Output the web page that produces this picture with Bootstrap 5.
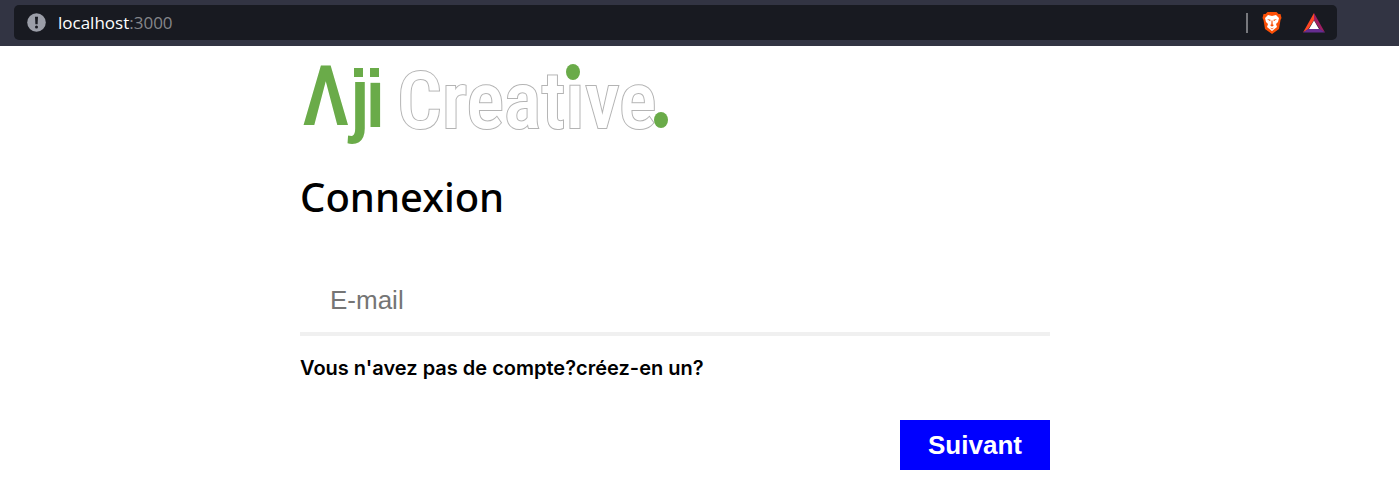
<!DOCTYPE html>
<html lang="fr">
<head>
<meta charset="utf-8">
<meta name="viewport" content="width=device-width, initial-scale=1">
<title>Connexion</title>
<link href="https://cdn.jsdelivr.net/npm/bootstrap@5.3.0/dist/css/bootstrap.min.css" rel="stylesheet">
<style>
  body { background: #fff; color: #000; }
  .browser-bar { background: #323443; height: 46px; padding: 5px 62px 6px 14px; }
  .address { background: #181a21; border-radius: 5px; padding: 0 11px 0 13px; font: 17px/35px "Open Sans", sans-serif; color: #fff; }
  .address .port { color: #85868a; }
  .divider { width: 2px; height: 20px; background: #77787d; margin-right: 14px; }
  .bat { margin-left: 20px; }
  .login { max-width: 750px; margin-left: 300px; padding-top: 14px; }
  .logo { display: block; width: 370px; height: 88px; overflow: visible; font-family: "Roboto Condensed", "Liberation Sans Narrow", sans-serif; }
  .login h1 { font: 500 40px/54px "Noto Sans", sans-serif; margin: 22px 0 44px; }
  .email { border: 0; border-bottom: 4px solid #f0f0f0; border-radius: 0; padding: 0 30px; height: 68px; font: 26px/30px "Liberation Sans", Arial, sans-serif; }
  .email::placeholder { color: #757575; }
  .signup { font: 600 20px/24px Inter, sans-serif; margin: 20px 0 40px; }
  .next { background: #00f; color: #fff; border: 0; border-radius: 0; width: 150px; height: 50px; padding: 0; font: bold 26px/50px "Liberation Sans", Arial, sans-serif; }
  .next:hover { background: #00c; color: #fff; }
  @media (max-width: 1060px) { .login { margin-left: auto; margin-right: auto; padding-left: 16px; padding-right: 16px; } }
</style>
</head>
<body>
<header class="browser-bar">
  <div class="address d-flex align-items-center">
    <svg width="19" height="19" viewBox="0 0 19 19" class="me-2 flex-shrink-0" aria-hidden="true">
      <circle cx="9.500" cy="9.500" r="9.300" fill="#9b9ea8"/>
      <path d="M8 3.800h3l-.4 7.400H8.400z" fill="#181a21"/><circle cx="9.500" cy="14" r="1.500" fill="#181a21"/>
    </svg>
    <div class="flex-grow-1 ps-1">localhost<span class="port">:3000</span></div>
    <span class="divider"></span>
    <svg width="20" height="24" viewBox="0 0 20 24" aria-hidden="true">
      <path d="M5.500 1h9l2 2h2l1 4-1 2-1.500 9L10 23 3 18 1.500 9l-1-2 1-4h2z" fill="#fb4f06"/>
      <path d="M6 4l4 1 4-1 3 3-1 4-2 2 1 3-5 4-5-4 1-3-2-2-1-4z" fill="#fff"/>
      <path d="M5 8l3.500.7-.3 1.500zM15 8l-3.500.7.3 1.500zM9.500 9.500h1l.2 4 1.300.6-2 1.600-2-1.600 1.300-.6zM8 16.500l2 1 2-1-2 2z" fill="#fb4f06"/>
    </svg>
    <svg width="24" height="20" viewBox="0 0 24 20" class="bat" aria-hidden="true">
      <path d="M12 0v7L6 16.500 1 19.500z" fill="#ff4724"/><path d="M12 0l11 19.500-5-3L12 7z" fill="#9e1f63"/>
      <path d="M1 19.500l5-3.500h12l5 3.500z" fill="#662d91"/><path d="M12 7.500l5 8.500H7z" fill="#fff"/>
    </svg>
  </div>
</header>

<main class="login">
  <svg class="logo" viewBox="0 0 370 88" role="img" aria-label="Aji Creative">
    <g fill="#6aab49" font-size="84" font-weight="500">
      <text x="2" y="65">Λ</text><text x="49" y="66">ȷ</text><text x="65" y="67">ı</text>
      <rect x="54" y="8" width="9" height="9"/><rect x="70" y="8" width="9" height="9"/>
    </g>
    <text x="97" y="68" font-size="79" font-weight="500" fill="#fff" stroke="#b4b4b4" stroke-width="2" paint-order="stroke">Creatıve</text>
    <ellipse cx="273" cy="12" rx="7" ry="8" fill="#6aab49"/><ellipse cx="361" cy="60" rx="7" ry="8" fill="#6aab49"/>
  </svg>
  <h1>Connexion</h1>
  <form>
    <label for="email" class="visually-hidden">E-mail</label>
    <input id="email" type="email" class="form-control email" placeholder="E-mail">
    <p class="signup">Vous n'avez pas de compte?<a href="#" class="text-reset text-decoration-none">créez-en un?</a></p>
    <div class="d-flex justify-content-end"><button type="submit" class="btn next">Suivant</button></div>
  </form>
</main>
<script src="https://cdn.jsdelivr.net/npm/bootstrap@5.3.0/dist/js/bootstrap.bundle.min.js"></script>
</body>
</html>
